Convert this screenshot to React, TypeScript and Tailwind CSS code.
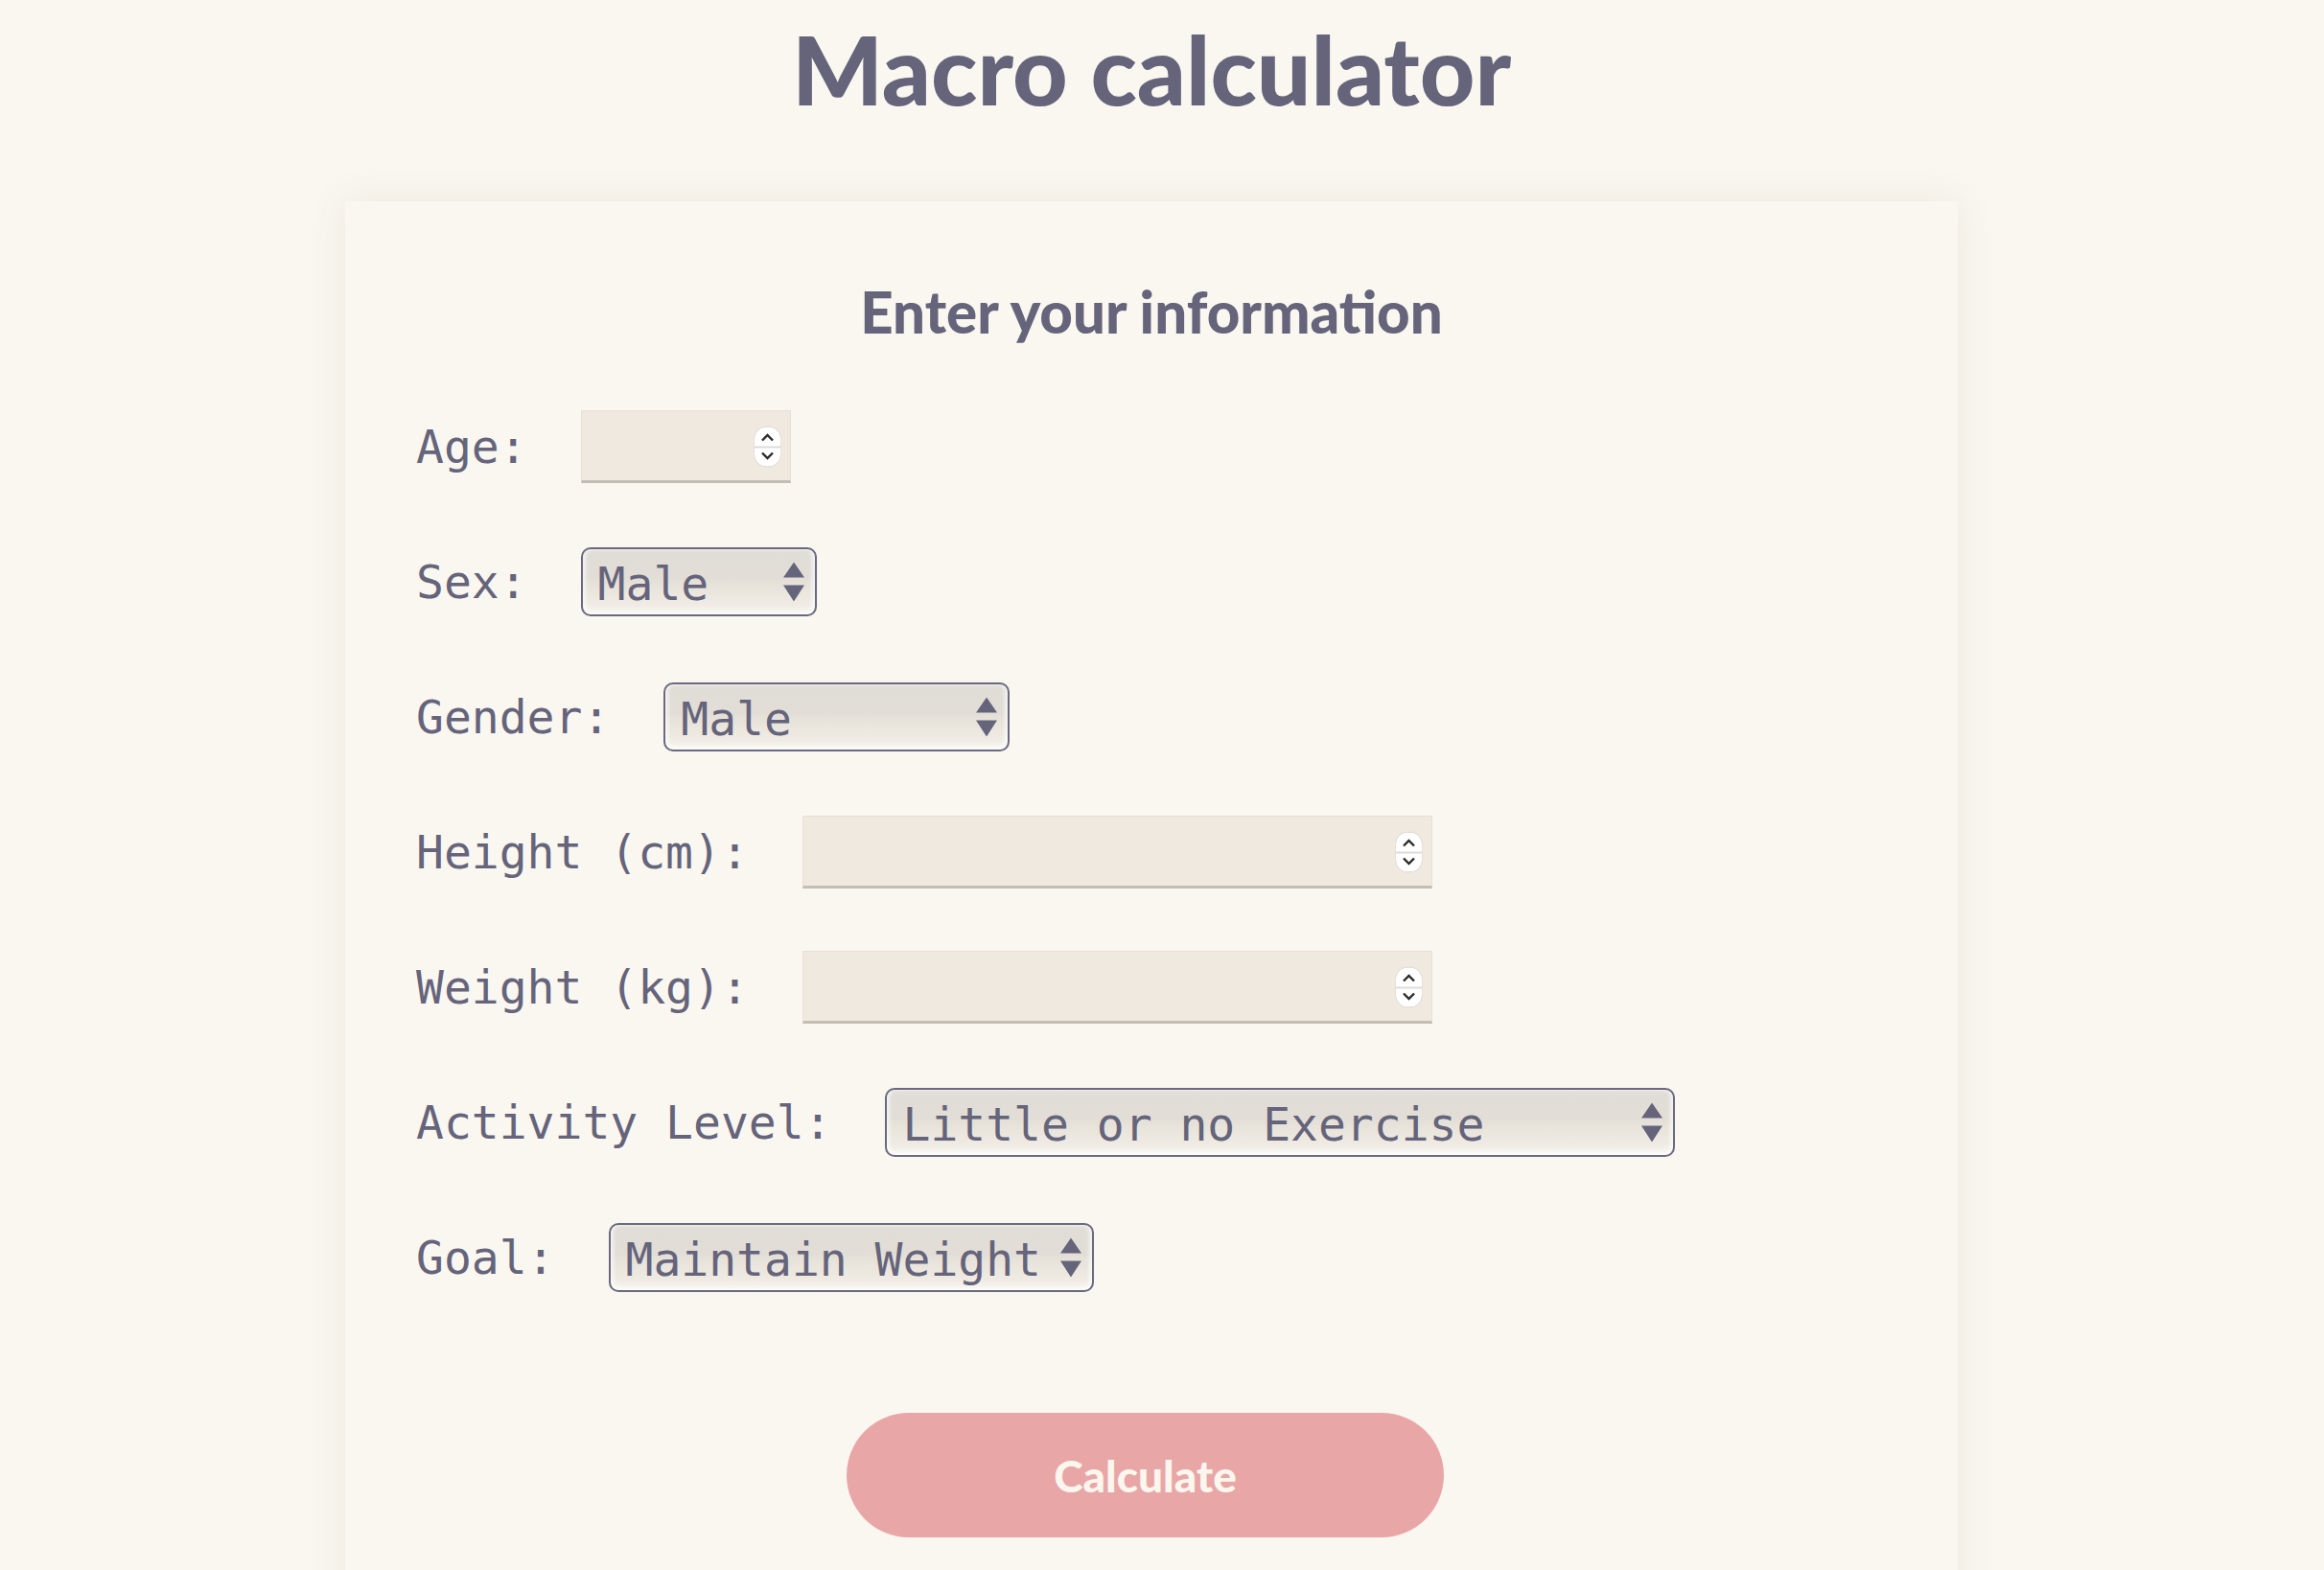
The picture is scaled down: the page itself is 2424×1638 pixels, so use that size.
import React from "react"

const mono = { fontFamily: '"DejaVu Sans Mono", "Liberation Mono", monospace' }
const round = { fontFamily: 'Lato, "Noto Sans", sans-serif' }

function Spinner() {
  return (
    <div className="pointer-events-none absolute right-[11px] top-1/2 -translate-y-1/2 flex h-[41px] w-[27px] flex-col items-center justify-between rounded-[12px] bg-white py-[6px] shadow-[0_0_1px_rgba(0,0,0,0.35)]">
      <svg width="15" height="10" viewBox="0 0 15 10">
        <path d="M2 8 L7.5 2.5 L13 8" fill="none" stroke="#2b2b2b" strokeWidth="2.4" />
      </svg>
      <div className="h-[2px] w-full bg-[#dcdcdc]" />
      <svg width="15" height="10" viewBox="0 0 15 10">
        <path d="M2 2 L7.5 7.5 L13 2" fill="none" stroke="#2b2b2b" strokeWidth="2.4" />
      </svg>
    </div>
  )
}

function NumberField({ width }: { width: string }) {
  return (
    <div className={`relative h-[76px] ${width}`}>
      <input
        type="number"
        className="h-full w-full border border-[#e6e0d6] border-b-[3px] border-b-[#c4bdb3] bg-[#f0e9e0] px-4 text-[48px] text-[#65647b] outline-none [appearance:textfield] [&::-webkit-inner-spin-button]:appearance-none [&::-webkit-outer-spin-button]:appearance-none"
        style={mono}
      />
      <Spinner />
    </div>
  )
}

function SelectField({ width, options }: { width: string; options: string[] }) {
  return (
    <div className={`relative h-[72px] ${width}`}>
      <select
        className="h-full w-full appearance-none rounded-[10px] border-2 border-[#6a6980] bg-[linear-gradient(to_bottom,#e0dcd6_0%,#e2ded7_45%,#e6e1d8_50%,#ede9e1_75%,#f4f0e9_100%)] pl-[16px] text-[48px] text-[#65647b] shadow-[inset_0_-4px_6px_rgba(255,255,255,0.7),inset_3px_0_4px_rgba(255,255,255,0.5),inset_-3px_0_4px_rgba(255,255,255,0.5)] outline-none"
        style={mono}
        defaultValue={options[0]}
      >
        {options.map((o) => (
          <option key={o}>{o}</option>
        ))}
      </select>
      <svg
        className="pointer-events-none absolute right-[13px] top-1/2 -translate-y-1/2"
        width="22"
        height="41"
        viewBox="0 0 22 41"
      >
        <polygon points="11,0 22,16 0,16" fill="#65647b" />
        <polygon points="0,24 22,24 11,41" fill="#65647b" />
      </svg>
    </div>
  )
}

function Row({ label, children }: { label: string; children: React.ReactNode }) {
  return (
    <div className="flex h-[76px] items-center">
      <label className="mr-[56px] whitespace-pre text-[48px] leading-none text-[#65647b]" style={mono}>
        {label}
      </label>
      {children}
    </div>
  )
}

export default function App() {
  return (
    <div className="flex min-h-screen flex-col items-center bg-[#faf7f0] pr-[22px]">
      <h1 className="mt-[21px] text-[100px] font-black leading-none text-[#65647b]" style={round}>
        Macro calculator
      </h1>

      <div className="mt-[89px] flex w-[1682px] flex-col bg-[#faf7f0] px-[74px] pb-[80px] pt-[85px] shadow-[0_0_40px_rgba(110,90,60,0.09)]">
        <h2 className="text-center text-[60px] font-black leading-none text-[#65647b]" style={round}>
          Enter your information
        </h2>

        <div className="mt-[73px] flex flex-col gap-[65px]">
          <Row label="Age:">
            <NumberField width="w-[219px]" />
          </Row>
          <Row label="Sex:">
            <SelectField width="w-[246px]" options={["Male", "Female"]} />
          </Row>
          <Row label="Gender:">
            <SelectField width="w-[361px]" options={["Male", "Female", "Non-binary"]} />
          </Row>
          <Row label="Height (cm):">
            <NumberField width="w-[657px]" />
          </Row>
          <Row label="Weight (kg):">
            <NumberField width="w-[657px]" />
          </Row>
          <Row label="Activity Level:">
            <SelectField
              width="w-[824px]"
              options={["Little or no Exercise", "Light Exercise", "Moderate Exercise", "Heavy Exercise"]}
            />
          </Row>
          <Row label="Goal:">
            <SelectField width="w-[506px]" options={["Maintain Weight", "Lose Weight", "Gain Weight"]} />
          </Row>
        </div>

        <button
          className="ml-[449px] mt-[124px] h-[130px] w-[623px] rounded-full bg-[#e8a7a6] text-[46px] font-black text-[#fbf6ee]"
          style={round}
        >
          Calculate
        </button>
      </div>
    </div>
  )
}
